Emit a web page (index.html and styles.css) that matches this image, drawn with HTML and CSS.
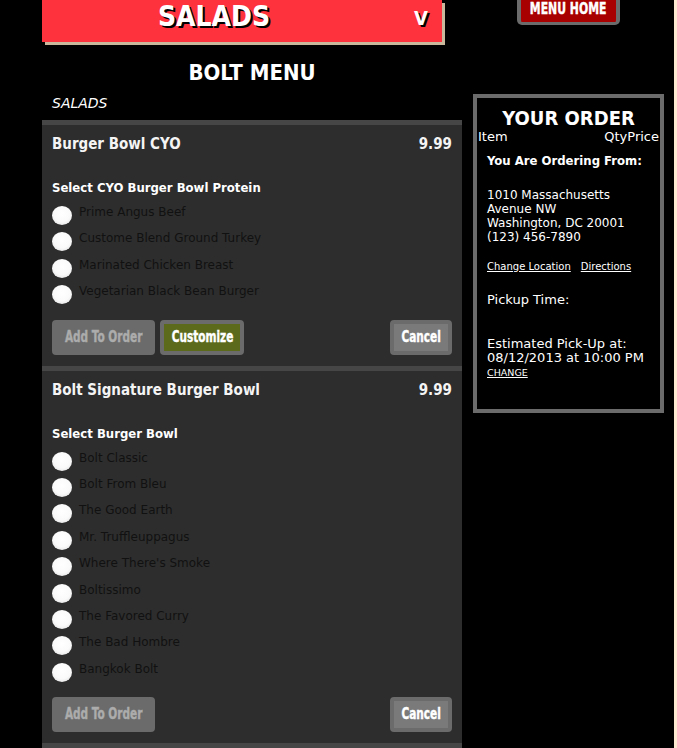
FILE: index.html
```html
<!DOCTYPE html>
<html lang="en">
<head>
<meta charset="utf-8">
<title>Bolt Menu - Salads</title>
<link rel="stylesheet" href="styles.css">
</head>
<body>
<div class="page">
  <div class="main">
    <div class="left">
      <div class="cat-bar">
        <span class="cat-title">SALADS</span>
        <span class="cat-toggle">V</span>
      </div>
      <h1 class="menu-title">BOLT MENU</h1>
      <div class="section-name">SALADS</div>

      <div class="card">
        <div class="card-head">
          <span class="item-name">Burger Bowl CYO</span>
          <span class="item-price">9.99</span>
        </div>
        <div class="opt-label">Select CYO Burger Bowl Protein</div>
        <ul class="options">
          <li class="option"><span class="radio"></span><span class="opt-text">Prime Angus Beef</span></li>
          <li class="option"><span class="radio"></span><span class="opt-text">Custome Blend Ground Turkey</span></li>
          <li class="option"><span class="radio"></span><span class="opt-text">Marinated Chicken Breast</span></li>
          <li class="option"><span class="radio"></span><span class="opt-text">Vegetarian Black Bean Burger</span></li>
        </ul>
        <div class="actions">
          <button class="btn btn-add"><span class="btn-label">Add To Order</span></button>
          <button class="btn btn-custom"><span class="btn-label">Customize</span></button>
          <button class="btn btn-cancel"><span class="btn-label">Cancel</span></button>
        </div>
      </div>

      <div class="card">
        <div class="card-head">
          <span class="item-name">Bolt Signature Burger Bowl</span>
          <span class="item-price">9.99</span>
        </div>
        <div class="opt-label">Select Burger Bowl</div>
        <ul class="options">
          <li class="option"><span class="radio"></span><span class="opt-text">Bolt Classic</span></li>
          <li class="option"><span class="radio"></span><span class="opt-text">Bolt From Bleu</span></li>
          <li class="option"><span class="radio"></span><span class="opt-text">The Good Earth</span></li>
          <li class="option"><span class="radio"></span><span class="opt-text">Mr. Truffleuppagus</span></li>
          <li class="option"><span class="radio"></span><span class="opt-text">Where There's Smoke</span></li>
          <li class="option"><span class="radio"></span><span class="opt-text">Boltissimo</span></li>
          <li class="option"><span class="radio"></span><span class="opt-text">The Favored Curry</span></li>
          <li class="option"><span class="radio"></span><span class="opt-text">The Bad Hombre</span></li>
          <li class="option"><span class="radio"></span><span class="opt-text">Bangkok Bolt</span></li>
        </ul>
        <div class="actions">
          <button class="btn btn-add"><span class="btn-label">Add To Order</span></button>
          <button class="btn btn-cancel"><span class="btn-label">Cancel</span></button>
        </div>
      </div>

      <div class="card card-next"></div>
    </div>

    <div class="right">
      <a class="menu-home" href="#"><span class="btn-label">MENU HOME</span></a>
      <div class="order">
        <h2 class="order-title">YOUR ORDER</h2>
        <div class="order-cols">
          <span>Item</span>
          <span class="order-cols-right"><span>Qty</span><span>Price</span></span>
        </div>
        <div class="order-body">
          <div class="from-label">You Are Ordering From:</div>
          <div class="address">
            1010 Massachusetts<br>
            Avenue NW<br>
            Washington, DC 20001<br>
            (123) 456-7890
          </div>
          <div class="loc-links">
            <a href="#">Change Location</a>
            <a href="#">Directions</a>
          </div>
          <div class="pickup-label">Pickup Time:</div>
          <div class="estimate">Estimated Pick-Up at:<br>08/12/2013 at 10:00 PM</div>
          <a class="change-link" href="#">CHANGE</a>
        </div>
      </div>
    </div>
  </div>
</div>
</body>
</html>
```

FILE: styles.css
```css
html {
  background: #fde8d2;
}

body {
  margin: 0;
  font-family: "DejaVu Sans", Verdana, sans-serif;
  color: #fff;
}

.page {
  width: 674px;
  min-height: 748px;
  background: #000;
  overflow: hidden;
}

.main {
  display: flex;
  align-items: flex-start;
  gap: 11px;
  padding-left: 42px;
}

/* ---------- left column ---------- */
.left {
  width: 420px;
  display: flex;
  flex-direction: column;
}

.cat-bar {
  width: 400px;
  height: 42px;
  box-sizing: border-box;
  background: #fd323c;
  box-shadow: 3px 3px 0 #c9b89b;
  display: flex;
  align-items: flex-start;
}

.cat-title {
  flex: 1;
  text-align: center;
  font-family: "DejaVu Sans Condensed", "DejaVu Sans", sans-serif;
  font-weight: bold;
  font-size: 28px;
  line-height: 32px;
  padding-top: 1px;
  color: #fff;
  text-shadow: 2px 2px 0 #000;
}

.cat-toggle {
  width: 56px;
  box-sizing: border-box;
  padding-right: 14px;
  text-align: right;
  font-family: "DejaVu Sans Condensed", "DejaVu Sans", sans-serif;
  font-weight: bold;
  font-size: 20px;
  line-height: 24px;
  padding-top: 6px;
  color: #fff;
  text-shadow: 2px 2px 0 #000;
}

.menu-title {
  margin: 18px 0 0;
  text-align: center;
  font-family: "DejaVu Sans Condensed", "DejaVu Sans", sans-serif;
  font-weight: bold;
  font-size: 22px;
  line-height: 26px;
  color: #fff;
}

.section-name {
  margin: 8px 0 8px 10px;
  font-style: italic;
  font-size: 14px;
  line-height: 18px;
  color: #fff;
}

.card {
  background: #2d2d2d;
  border-top: 5px solid #464646;
  padding: 9px 10px 11px;
}

.card-next {
  height: 40px;
  padding: 0;
}

.card-head {
  display: flex;
  justify-content: space-between;
  font-family: "DejaVu Sans Condensed", "DejaVu Sans", sans-serif;
  font-weight: bold;
  font-size: 15px;
  line-height: 20px;
  color: #f4f4f4;
}

.opt-label {
  margin-top: 26px;
  font-family: "DejaVu Sans Condensed", "DejaVu Sans", sans-serif;
  font-weight: bold;
  font-size: 13px;
  line-height: 16px;
  color: #fff;
}

.options {
  list-style: none;
  margin: 6px 0 0;
  padding: 0;
}

.option {
  height: 26.4px;
  display: flex;
  align-items: flex-start;
}

.radio {
  width: 20px;
  height: 19px;
  margin-top: 4px;
  border-radius: 50%;
  background: radial-gradient(circle at 50% 40%, #ffffff 0%, #fafafa 55%, #d6d6d6 100%);
  flex: none;
}

.opt-text {
  margin-left: 7px;
  margin-top: 2px;
  font-size: 12px;
  line-height: 16px;
  color: #111;
}

.actions {
  margin-top: 12px;
  display: flex;
  gap: 5px;
}

.btn {
  height: 35px;
  box-sizing: border-box;
  border: 0;
  border-radius: 4px;
  padding: 0;
  display: flex;
  align-items: center;
  justify-content: center;
  font-family: "DejaVu Sans Condensed", "DejaVu Sans", sans-serif;
  font-weight: bold;
  font-size: 15px;
  line-height: 1;
  color: #fff;
  cursor: pointer;
}

.btn-label {
  display: inline-block;
  white-space: nowrap;
  transform: scaleX(0.78);
  -webkit-text-stroke: 0.4px currentColor;
}

.btn-add {
  width: 103px;
  background: #6b6b6b;
  color: #acacac;
}

.btn-custom {
  width: 84px;
  border: 4px solid #6b6b6b;
  background: #5b6a1b;
}

.btn-cancel {
  width: 62px;
  margin-left: auto;
  border: 4px solid #6b6b6b;
  background: #7a7a7a;
}

/* ---------- right column ---------- */
.right {
  width: 191px;
  display: flex;
  flex-direction: column;
  align-items: center;
}

.menu-home {
  display: flex;
  justify-content: center;
  width: 103px;
  height: 25px;
  box-sizing: border-box;
  background: #a80000;
  border: 4px solid #6b6b6b;
  border-top: 0;
  border-bottom-width: 3px;
  border-radius: 0 0 5px 5px;
  padding: 0;
  font-family: "DejaVu Sans Condensed", "DejaVu Sans", sans-serif;
  font-weight: bold;
  font-size: 15.5px;
  line-height: 18px;
  color: #fff;
  text-decoration: none;
}

.order {
  align-self: stretch;
  margin-top: 69px;
  border: 4px solid #6b6b6b;
  padding: 9px 0 30px;
  background: #000;
}

.order-title {
  margin: 0;
  text-align: center;
  font-family: "DejaVu Sans Condensed", "DejaVu Sans", sans-serif;
  font-weight: bold;
  font-size: 20px;
  line-height: 22px;
  color: #fff;
}

.order-cols {
  display: flex;
  justify-content: space-between;
  padding: 0 1px 0 1px;
  font-size: 13px;
  line-height: 15px;
}

.order-body {
  padding: 0 10px;
}

.from-label {
  margin-top: 9px;
  font-family: "DejaVu Sans Condensed", "DejaVu Sans", sans-serif;
  font-weight: bold;
  font-size: 13px;
  line-height: 16px;
}

.address {
  margin-top: 19px;
  font-size: 12px;
  line-height: 14px;
}

.loc-links {
  margin-top: 17px;
  display: flex;
  gap: 10px;
  font-size: 10px;
  line-height: 12px;
}

.loc-links a,
.change-link {
  color: #fff;
  text-decoration: underline;
}

.pickup-label {
  margin-top: 19px;
  font-size: 13px;
  line-height: 16px;
}

.estimate {
  margin-top: 29px;
  font-size: 13px;
  line-height: 14px;
}

.change-link {
  display: block;
  margin-top: 2px;
  font-size: 9.5px;
  line-height: 12px;
}
```
